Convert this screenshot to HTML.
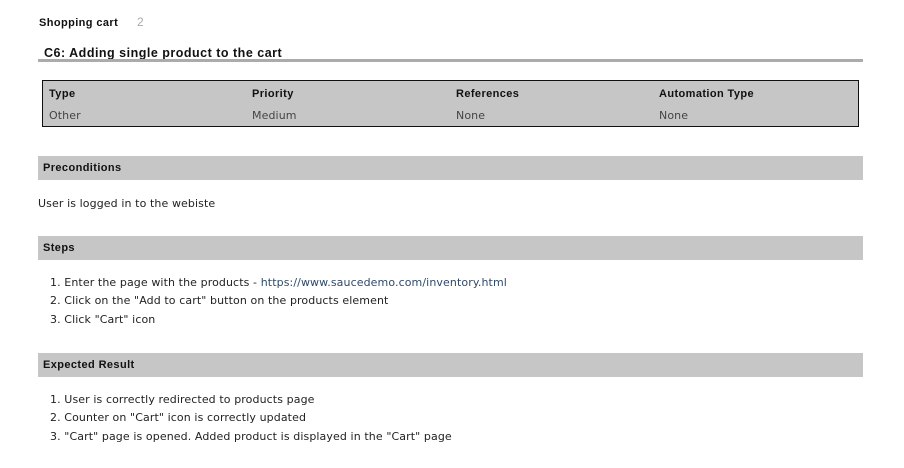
<!DOCTYPE html>
<html><head><style>
body{margin:0;width:904px;height:468px;background:#fff;font-family:"Liberation Sans",sans-serif;color:#222;position:relative;overflow:hidden}
.a{position:absolute;white-space:nowrap}
.bar{position:absolute;left:38px;width:825px;height:24px;background:#c6c6c6;font-size:11px;font-weight:bold;line-height:25px;text-indent:5px;color:#111;letter-spacing:0.4px}
.t{font-size:11px;color:#222;font-family:"DejaVu Sans",sans-serif;letter-spacing:0.1px}
.h{font-size:11px;font-weight:bold;color:#111;letter-spacing:0.4px}
.v{font-size:11px;color:#444;font-family:"DejaVu Sans",sans-serif;letter-spacing:0.1px}
</style></head><body>
<div class="a h" style="left:39px;top:17px">Shopping cart</div>
<div class="a" style="left:137px;top:15px;font-size:12px;color:#aaa">2</div>
<div class="a" style="left:44px;top:46px;font-size:12.5px;font-weight:bold;color:#111;letter-spacing:0.5px">C6: Adding single product to the cart</div>
<div class="a" style="left:38px;top:59px;width:825px;height:3px;background:#ababab"></div>
<div class="a" style="left:42px;top:80px;width:815px;height:45px;background:#c6c6c6;border:1px solid #111"></div>
<div class="a h" style="left:49px;top:88px">Type</div>
<div class="a v" style="left:49px;top:109px">Other</div>
<div class="a h" style="left:252px;top:88px">Priority</div>
<div class="a v" style="left:252px;top:109px">Medium</div>
<div class="a h" style="left:456px;top:88px">References</div>
<div class="a v" style="left:456px;top:109px">None</div>
<div class="a h" style="left:659px;top:88px">Automation Type</div>
<div class="a v" style="left:659px;top:109px">None</div>
<div class="bar" style="top:156px">Preconditions</div>
<div class="a t" style="left:38px;top:197px">User is logged in to the webiste</div>
<div class="bar" style="top:236px">Steps</div>
<div class="a t" style="left:50px;top:276px">1. Enter the page with the products - <span style="color:#2e4a6b">https://www.saucedemo.com/inventory.html</span></div>
<div class="a t" style="left:50px;top:294px">2. Click on the "Add to cart" button on the products element</div>
<div class="a t" style="left:50px;top:313px">3. Click "Cart" icon</div>
<div class="bar" style="top:353px">Expected Result</div>
<div class="a t" style="left:50px;top:393px">1. User is correctly redirected to products page</div>
<div class="a t" style="left:50px;top:411px">2. Counter on "Cart" icon is correctly updated</div>
<div class="a t" style="left:50px;top:430px">3. "Cart" page is opened. Added product is displayed in the "Cart" page</div>
</body></html>
